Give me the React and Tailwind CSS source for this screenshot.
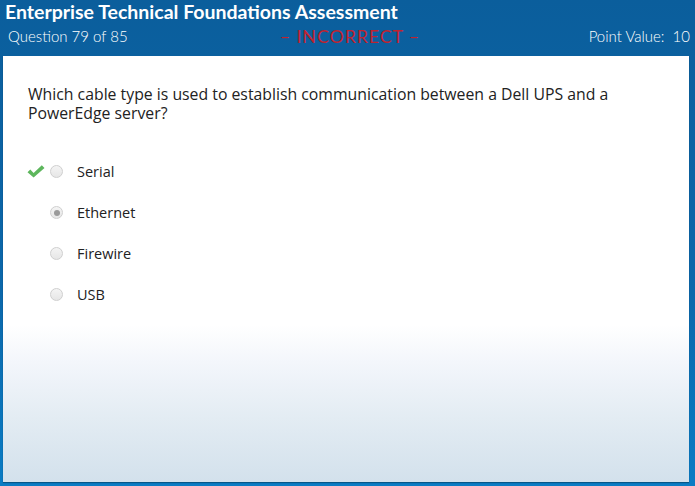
const options = [
  { label: 'Serial', correct: true, selected: false },
  { label: 'Ethernet', correct: false, selected: true },
  { label: 'Firewire', correct: false, selected: false },
  { label: 'USB', correct: false, selected: false },
]

function Radio({ selected }) {
  return (
    <span className="w-[13px] h-[13px] rounded-full border border-[#cfcfcf] bg-[linear-gradient(to_bottom,#f4f4f4,#e6e6e6)] flex items-center justify-center shrink-0">
      {selected && <span className="w-[6px] h-[6px] rounded-full bg-[#9a9a9a]" />}
    </span>
  )
}

function CheckMark() {
  return (
    <svg width="18" height="13" viewBox="0 0 18 13">
      <path d="M0.5 7.2 L3.3 4.6 L6.6 8 L14.8 0.3 L17.5 3 L6.6 12.6 Z" fill="#5db65c" />
    </svg>
  )
}

export default function App() {
  return (
    <div className="w-[695px] h-[486px] flex flex-col bg-[linear-gradient(to_bottom,#0b5e9c,#0b68ab_60%,#0a7cc4)] font-['Lato','Open_Sans',sans-serif] overflow-hidden">
      <div className="h-[23px] px-[5px] flex items-center">
        <h1 className="text-[19.5px] font-bold text-white leading-none">
          Enterprise Technical Foundations Assessment
        </h1>
      </div>
      <div className="h-[27px] pl-[8px] pr-[5px] grid grid-cols-3 items-center text-white">
        <span className="text-[15px] font-light">Question 79 of 85</span>
        <span className="text-[18px] text-[#c0232f] text-center tracking-[0.8px] pl-[2px]">– INCORRECT –</span>
        <span className="text-[15px] font-light text-right">Point Value:&nbsp; 10</span>
      </div>
      <div className="flex-1 ml-[3px] mr-[6px] mb-[4px] mt-[6px] bg-[linear-gradient(to_bottom,#ffffff_0%,#ffffff_63%,#f3f6fb_72%,#e3ecf3_85%,#d3e1ec_100%)] shadow-[0_1px_1px_rgba(0,0,0,0.3)]">
        <p className="pt-[29px] pl-[25px] max-w-[620px] text-[15.8px] leading-[19px] text-[#222] font-['Open_Sans',sans-serif]">
          Which cable type is used to establish communication between a Dell UPS and a PowerEdge server?
        </p>
        <ul className="mt-[39px] flex flex-col gap-[22px] font-['Open_Sans',sans-serif]">
          {options.map(o => (
            <li key={o.label} className="flex items-center h-[19px]">
              <span className="w-[47px] flex justify-end pr-[5px]">
                {o.correct && <CheckMark />}
              </span>
              <Radio selected={o.selected} />
              <span className="ml-[14px] text-[14.5px] text-[#222]">{o.label}</span>
            </li>
          ))}
        </ul>
      </div>
    </div>
  )
}
